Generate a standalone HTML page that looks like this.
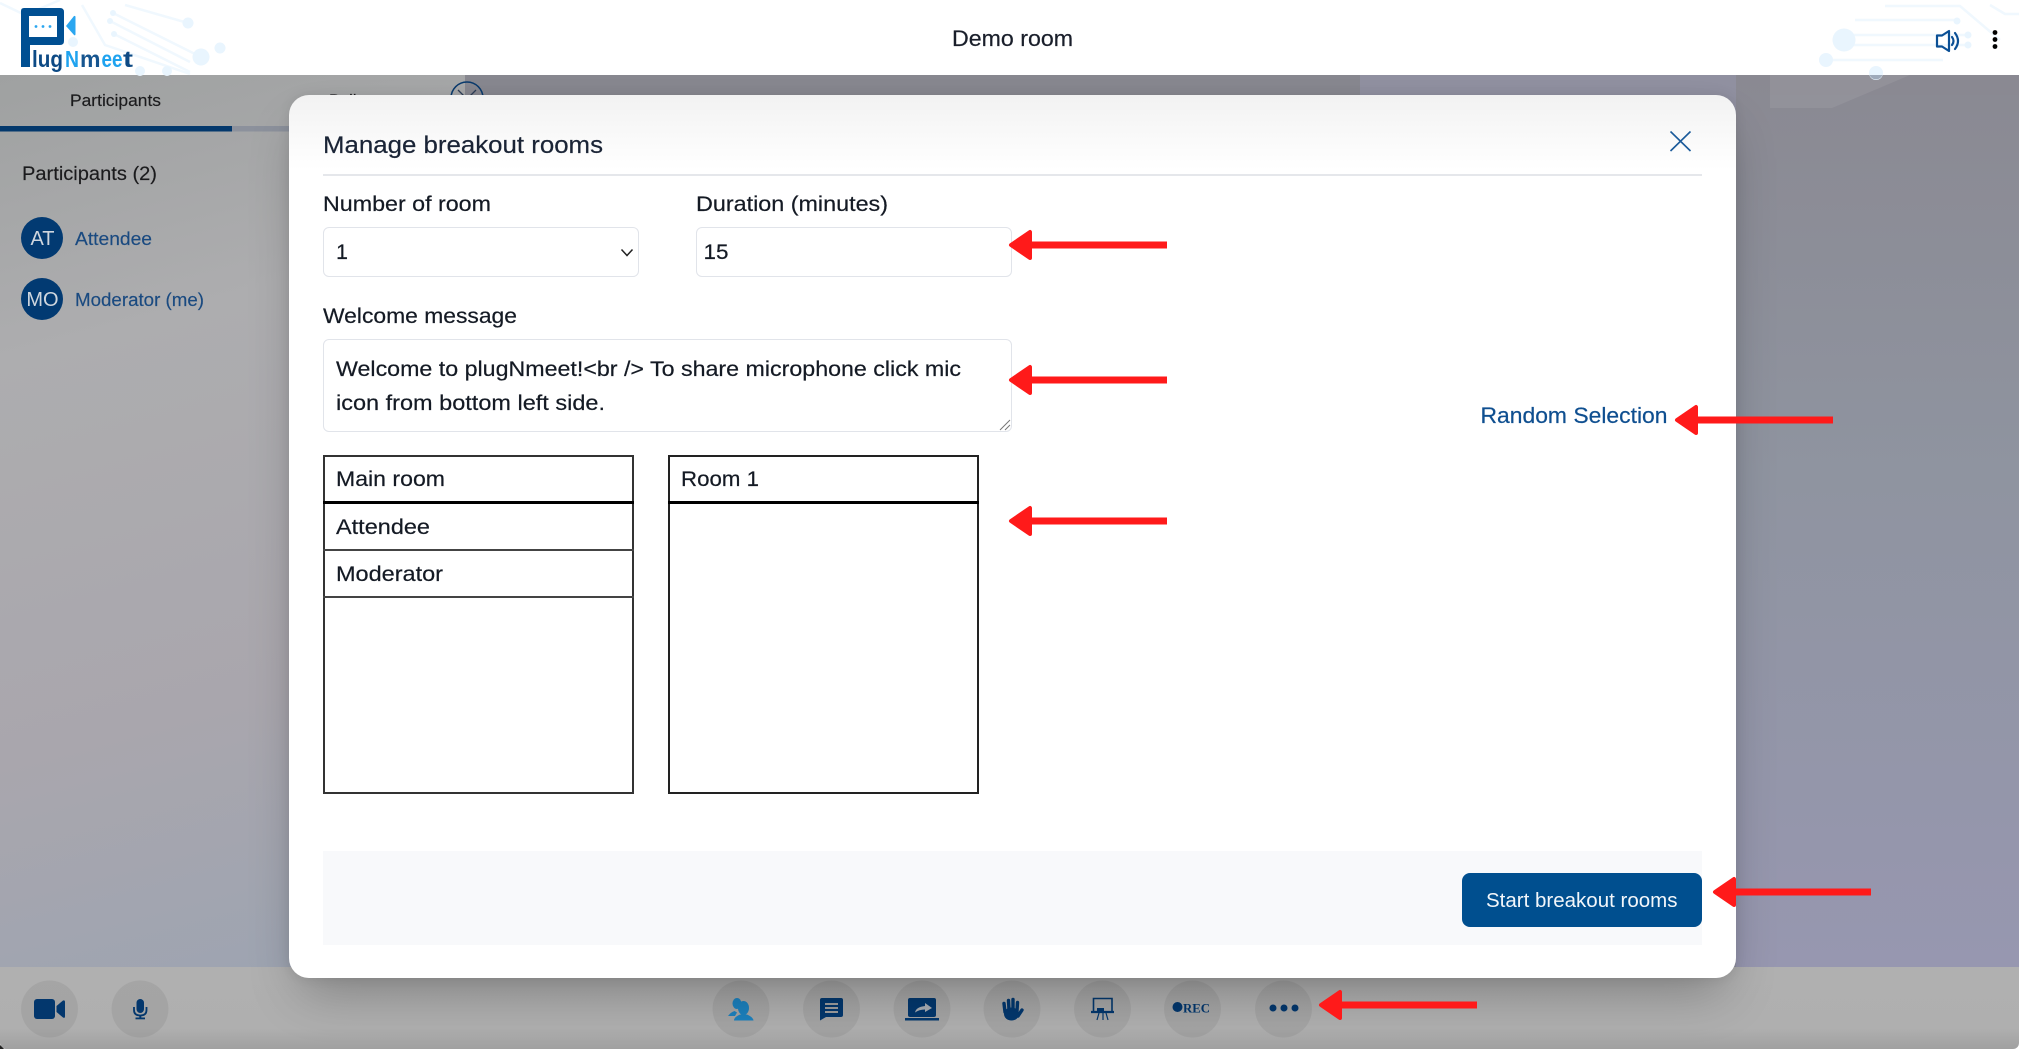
<!DOCTYPE html>
<html lang="en">
<head>
<meta charset="utf-8">
<title>Manage breakout rooms</title>
<style>
html,body{margin:0;padding:0;width:2019px;height:1050px;overflow:hidden;background:#fff}
body{position:relative;font-family:"Liberation Sans",sans-serif}
.a{position:absolute}
svg.a{left:0;top:0;width:2019px;height:1050px;overflow:hidden}
svg text{font-family:"Liberation Sans",sans-serif}
</style>
</head>
<body>
<!-- backgrounds -->
<div class="a" style="left:0;top:75px;width:465px;height:892px;background:linear-gradient(165deg,#9fa1a1 0%,#adadaf 28%,#a9a6ad 68%,#9ca4b2 100%)"></div>
<div class="a" style="left:465px;top:75px;width:895px;height:892px;background:#87878f"></div>
<div class="a" style="left:1360px;top:75px;width:410px;height:892px;background:#9090a0"></div>
<div class="a" style="left:1736px;top:75px;width:283px;height:892px;background:linear-gradient(180deg,#8a8992 0%,#8f94a0 45%,#9797b0 100%)"></div>
<div class="a" style="left:1770px;top:75px;width:249px;height:20px;background:#8a8992"></div>
<div class="a" style="left:0;top:967px;width:2019px;height:82px;background:linear-gradient(180deg,#b0b0b0 0%,#afafaf 75%,#a0a0a0 100%);border-bottom-left-radius:6px;border-bottom-right-radius:6px"></div>
<div class="a" style="left:0;top:1045px;width:4px;height:4px;background:#222;z-index:0;clip-path:polygon(0 0,100% 100%,0 100%)"></div>

<svg class="a" viewBox="0 0 2019 1050" xmlns="http://www.w3.org/2000/svg">
  <!-- header -->
  <rect x="0" y="0" width="2019" height="75" fill="#fff"/>
  <g fill="none" stroke="#f0f8fe" stroke-width="2.500">
    <path d="M113 13L201 57M110 21L190 62M114 34L190 72M125 5L188 23M82 5L105 45L190 74M0 3L25 15L60 0"/>
    <path d="M1885 6H1960L2000 40M1855 20H1957M1844 35H1968M1844 45H1968M1826 60H1943M1990 5L2005 14H2019"/>
  </g>
  <g fill="#e9f5fe">
    <circle cx="188" cy="23" r="5.500"/><circle cx="220" cy="48" r="5.500"/><circle cx="201" cy="57" r="8.500"/><circle cx="140" cy="71" r="5"/><circle cx="167" cy="71" r="5"/><circle cx="73" cy="42" r="5"/><circle cx="113" cy="13" r="3"/><circle cx="110" cy="21" r="3"/><circle cx="114" cy="34" r="3"/>
    <circle cx="1844" cy="40" r="11.500"/><circle cx="1826" cy="60" r="7"/><circle cx="1876" cy="73" r="7"/><circle cx="1957" cy="21" r="3.500"/><circle cx="1968" cy="35" r="3.500"/><circle cx="1968" cy="45" r="3.500"/>
  </g>
  <!-- logo -->
  <path fill-rule="evenodd" fill="#004f92" d="M24 8H60Q64 8 64 12V41Q64 45 60 45H30V67H21V11Q21 8 24 8ZM29 16V37H57V16Z"/>
  <g fill="#2aa6f0"><circle cx="36" cy="26.500" r="1.400"/><circle cx="43" cy="26.500" r="1.400"/><circle cx="50" cy="26.500" r="1.400"/><path d="M66 26L74 16Q75.500 15.500 75.500 17V34Q75.500 36 74 35Z"/></g>
  <g font-size="23" font-weight="700">
    <text x="32" y="67" textLength="31" lengthAdjust="spacingAndGlyphs" fill="#0d4a85">lug</text>
    <text x="65" y="67" textLength="14" lengthAdjust="spacingAndGlyphs" fill="#1fa3ef">N</text>
    <text x="80" y="67" textLength="20.500" lengthAdjust="spacingAndGlyphs" fill="#16558f">m</text>
    <text x="101.500" y="67" textLength="21" lengthAdjust="spacingAndGlyphs" fill="#1fa3ef">ee</text>
    <text x="123" y="67" textLength="10" lengthAdjust="spacingAndGlyphs" fill="#0d4a85">t</text>
  </g>
  <text x="952" y="46" font-size="22" textLength="121" lengthAdjust="spacingAndGlyphs" fill="#1a1f2b" stroke="#1a1f2b" stroke-width=".2">Demo room</text>
  <!-- speaker and menu -->
  <g fill="none" stroke="#0a4f95" stroke-width="2.200" stroke-linejoin="round" stroke-linecap="round">
    <path d="M1937 35.500H1942L1949 31V51L1942 46.500H1937Z"/>
    <path d="M1952 37Q1955 41 1952 45"/><path d="M1955 33Q1961 41 1955 49"/>
  </g>
  <g fill="#000"><circle cx="1995" cy="32.500" r="2.400"/><circle cx="1995" cy="39.500" r="2.400"/><circle cx="1995" cy="46.500" r="2.400"/></g>

  <!-- translucent polygon right -->
  <path d="M1770 75V108H1832L1910 75Z" fill="#fff" fill-opacity=".07"/>
  <path d="M1869.500 75A7 7 0 0 0 1882.500 75Z" fill="#7f8a9c" fill-opacity=".7"/>

  <!-- sidebar -->
  <g stroke="#1b1b1d" stroke-width=".15">
  <text x="70" y="106" font-size="16.500" textLength="91" lengthAdjust="spacingAndGlyphs" fill="#1b1b1d">Participants</text>
  <text x="329" y="106" font-size="16.500" fill="#1b1b1d">Polls</text>
  <text x="22" y="180" font-size="19" textLength="135" lengthAdjust="spacingAndGlyphs" fill="#1b1b1d">Participants (2)</text>
  </g>
  <rect x="0" y="126" width="232" height="5.500" fill="#03386c"/>
  <rect x="232" y="126" width="233" height="5.500" fill="#8c919c"/>
  <circle cx="467" cy="98" r="16" fill="none" stroke="#0a3a6c" stroke-width="1.500"/>
  <path d="M458 90L467 99L476 90" fill="none" stroke="#2f3f58" stroke-width="1.300"/>
  <circle cx="42" cy="238" r="21" fill="#023a72"/>
  <circle cx="42" cy="299" r="21" fill="#023a72"/>
  <text x="42.500" y="245" font-size="20" text-anchor="middle" fill="#cfd6de">AT</text>
  <text x="42.500" y="306" font-size="20" text-anchor="middle" fill="#cfd6de">MO</text>
  <text x="75" y="245" font-size="18" textLength="77" lengthAdjust="spacingAndGlyphs" fill="#1a4a80" stroke="#1a4a80" stroke-width=".15">Attendee</text>
  <text x="75" y="306" font-size="18" textLength="129" lengthAdjust="spacingAndGlyphs" fill="#1a4a80" stroke="#1a4a80" stroke-width=".15">Moderator (me)</text>

  <!-- toolbar -->
  <g fill="#000" fill-opacity=".06">
    <circle cx="49.500" cy="1009" r="28.500"/><circle cx="140" cy="1009" r="28.500"/>
    <circle cx="741" cy="1009" r="28.500"/><circle cx="831.500" cy="1009" r="28.500"/><circle cx="922" cy="1009" r="28.500"/><circle cx="1012" cy="1009" r="28.500"/><circle cx="1102.500" cy="1009" r="28.500"/><circle cx="1192.500" cy="1009" r="28.500"/><circle cx="1283.500" cy="1009" r="28.500"/>
  </g>
  <g fill="#03376d">
    <rect x="34" y="999" width="21" height="20" rx="3"/>
    <path d="M56.500 1006L63 1000.500Q65 1000 65 1002V1016.500Q65 1018.500 63 1017.500L56.500 1012Z"/>
    <rect x="136.500" y="999" width="7.500" height="14" rx="3.750"/>
    <path d="M134 1007V1010Q134 1015.500 140.250 1015.500Q146.500 1015.500 146.500 1010V1007" fill="none" stroke="#03376d" stroke-width="1.800"/>
    <rect x="139.300" y="1015" width="2" height="3"/><rect x="135.500" y="1017.500" width="9.500" height="1.800"/>
  </g>
  <!-- participants icon -->
  <g fill="#1c80bd">
    <ellipse cx="737" cy="1003.500" rx="4.500" ry="5.500"/>
    <path d="M728 1016Q731 1012 734.500 1011L737 1012.500L735 1016Z"/>
    <ellipse cx="743.500" cy="1008" rx="5.500" ry="7"/>
    <path d="M734 1020.500Q734 1017 740 1014.500H747Q753 1017 753.500 1020.500Z"/>
  </g>
  <!-- chat -->
  <path fill="#03376d" d="M822 998H841Q843 998 843 1000V1015Q843 1017 841 1017H826L820 1020.500V1000Q820 998 822 998Z"/>
  <g fill="#9d9d9d"><rect x="825" y="1003" width="13" height="2"/><rect x="825" y="1007" width="13" height="2"/><rect x="825" y="1011" width="13" height="2"/></g>
  <!-- share screen -->
  <rect x="908" y="998" width="28" height="19" rx="2" fill="#03376d"/>
  <rect x="905" y="1018" width="34" height="2.500" fill="#03376d"/>
  <path d="M915 1012.500Q916 1007 925 1006V1003L932 1008L925 1012V1009.500Q919 1009.500 915 1012.500Z" fill="#a9adb3"/>
  <!-- hand -->
  <g stroke="#03376d" stroke-width="3.400" stroke-linecap="round" fill="none">
    <path d="M1005 1012L1004 1003.500M1009 1010L1008.500 1000.500M1013 1010V999.500M1017 1011L1017.500 1002.500M1018 1016L1022 1010"/>
  </g>
  <ellipse cx="1011.500" cy="1014" rx="7.500" ry="6.500" fill="#03376d"/>
  <!-- presentation -->
  <g fill="none" stroke="#03376d">
    <path d="M1093.500 1011V998.500H1112V1011" stroke-width="1.600"/>
    <path d="M1091 1012H1114" stroke-width="2.200"/>
    <path d="M1099 1013L1097 1020M1103 1013V1020M1106 1013L1108 1020" stroke-width="1.200"/>
  </g>
  <rect x="1097" y="1008" width="7" height="3" fill="#03376d"/>
  <!-- rec -->
  <circle cx="1177.500" cy="1007" r="5" fill="#03376d"/>
  <text x="1183" y="1012.500" font-size="13" font-weight="700" textLength="27" lengthAdjust="spacingAndGlyphs" style="font-family:'Liberation Serif',serif" fill="#03376d">REC</text>
  <!-- more -->
  <g fill="#03376d"><circle cx="1273" cy="1008" r="3.500"/><circle cx="1284" cy="1008" r="3.500"/><circle cx="1295" cy="1008" r="3.500"/></g>
</svg>

<!-- modal -->
<div class="a" style="left:289px;top:95px;width:1447px;height:883px;border-radius:20px;background:linear-gradient(180deg,#f2f2f2 0,#fff 75px);box-shadow:0 25px 50px -12px rgba(0,0,0,.28),0 0 12px rgba(0,0,0,.08)"></div>
<div class="a" style="left:323px;top:174px;width:1379px;height:1.500px;background:#e5e7eb"></div>
<div class="a" style="left:323px;top:227px;width:316px;height:50px;box-sizing:border-box;border:1.500px solid #e1e4ea;border-radius:6px;background:#fff"></div>
<div class="a" style="left:696px;top:227px;width:316px;height:50px;box-sizing:border-box;border:1.500px solid #e1e4ea;border-radius:6px;background:#fff"></div>
<div class="a" style="left:323px;top:339px;width:689px;height:93px;box-sizing:border-box;border:1.500px solid #e1e4ea;border-radius:6px;background:#fff"></div>
<div class="a" style="left:323px;top:455px;width:311px;height:339px;box-sizing:border-box;border:2px solid #333;background:#fff"></div>
<div class="a" style="left:668px;top:455px;width:311px;height:339px;box-sizing:border-box;border:2px solid #222;background:#fff"></div>
<div class="a" style="left:323px;top:501px;width:311px;height:2.500px;background:#000"></div>
<div class="a" style="left:668px;top:501px;width:311px;height:2.500px;background:#000"></div>
<div class="a" style="left:323px;top:549px;width:311px;height:1.500px;background:#444"></div>
<div class="a" style="left:323px;top:596px;width:311px;height:2px;background:#444"></div>
<div class="a" style="left:323px;top:851px;width:1379px;height:94px;background:#f8f9fb"></div>
<div class="a" style="left:1462px;top:873px;width:240px;height:54px;border-radius:8px;background:#004f8f"></div>

<svg class="a" viewBox="0 0 2019 1050" xmlns="http://www.w3.org/2000/svg">
  <text x="323" y="153" font-size="24" textLength="280" lengthAdjust="spacingAndGlyphs" fill="#1a2436" stroke="#1a2436" stroke-width=".2">Manage breakout rooms</text>
  <path d="M1670.500 131.500L1690.500 151M1690.500 131.500L1670.500 151" stroke="#1a5a9a" stroke-width="1.600" fill="none"/>
  <g font-size="21.500" fill="#141a24" stroke="#141a24" stroke-width=".2">
    <text x="323" y="211" textLength="168" lengthAdjust="spacingAndGlyphs">Number of room</text>
    <text x="696" y="211" textLength="192" lengthAdjust="spacingAndGlyphs">Duration (minutes)</text>
    <text x="323" y="323" textLength="194" lengthAdjust="spacingAndGlyphs">Welcome message</text>
    <text x="336" y="259" textLength="12" lengthAdjust="spacingAndGlyphs">1</text>
    <text x="703.500" y="259" textLength="25" lengthAdjust="spacingAndGlyphs">15</text>
    <text x="336" y="376" textLength="625" lengthAdjust="spacingAndGlyphs">Welcome to plugNmeet!&lt;br /&gt; To share microphone click mic</text>
    <text x="336" y="410" textLength="269" lengthAdjust="spacingAndGlyphs">icon from bottom left side.</text>
    <text x="336" y="486" textLength="109" lengthAdjust="spacingAndGlyphs">Main room</text>
    <text x="681" y="486" textLength="78" lengthAdjust="spacingAndGlyphs">Room 1</text>
    <text x="336" y="534" textLength="94" lengthAdjust="spacingAndGlyphs">Attendee</text>
    <text x="336" y="581" textLength="107" lengthAdjust="spacingAndGlyphs">Moderator</text>
  </g>
  <path d="M621.500 249.500L627 255.500L632.500 249.500" fill="none" stroke="#222" stroke-width="1.500"/>
  <path d="M1000 430L1010 420M1005 430L1010 425" fill="none" stroke="#777" stroke-width="1"/>
  <text x="1480.500" y="423" font-size="22" textLength="187" lengthAdjust="spacingAndGlyphs" fill="#0f4f90" stroke="#0f4f90" stroke-width=".2">Random Selection</text>
  <text x="1486" y="907" font-size="20" textLength="191.500" lengthAdjust="spacingAndGlyphs" fill="#f2f6fa">Start breakout rooms</text>

  <!-- annotation arrows -->
  <g fill="#ff1a1a" stroke="#ff1a1a">
    <g transform="translate(1009 245)"><path d="M2 0L21 -13V13Z" stroke-width="4" stroke-linejoin="round"/><rect x="15" y="-3.500" width="143" height="7" stroke="none"/></g>
    <g transform="translate(1009 380)"><path d="M2 0L21 -13V13Z" stroke-width="4" stroke-linejoin="round"/><rect x="15" y="-3.500" width="143" height="7" stroke="none"/></g>
    <g transform="translate(1009 521)"><path d="M2 0L21 -13V13Z" stroke-width="4" stroke-linejoin="round"/><rect x="15" y="-3.500" width="143" height="7" stroke="none"/></g>
    <g transform="translate(1675 420)"><path d="M2 0L21 -13V13Z" stroke-width="4" stroke-linejoin="round"/><rect x="15" y="-3.500" width="143" height="7" stroke="none"/></g>
    <g transform="translate(1713 892)"><path d="M2 0L21 -13V13Z" stroke-width="4" stroke-linejoin="round"/><rect x="15" y="-3.500" width="143" height="7" stroke="none"/></g>
    <g transform="translate(1319 1005)"><path d="M2 0L21 -13V13Z" stroke-width="4" stroke-linejoin="round"/><rect x="15" y="-3.500" width="143" height="7" stroke="none"/></g>
  </g>
</svg>
</body>
</html>
